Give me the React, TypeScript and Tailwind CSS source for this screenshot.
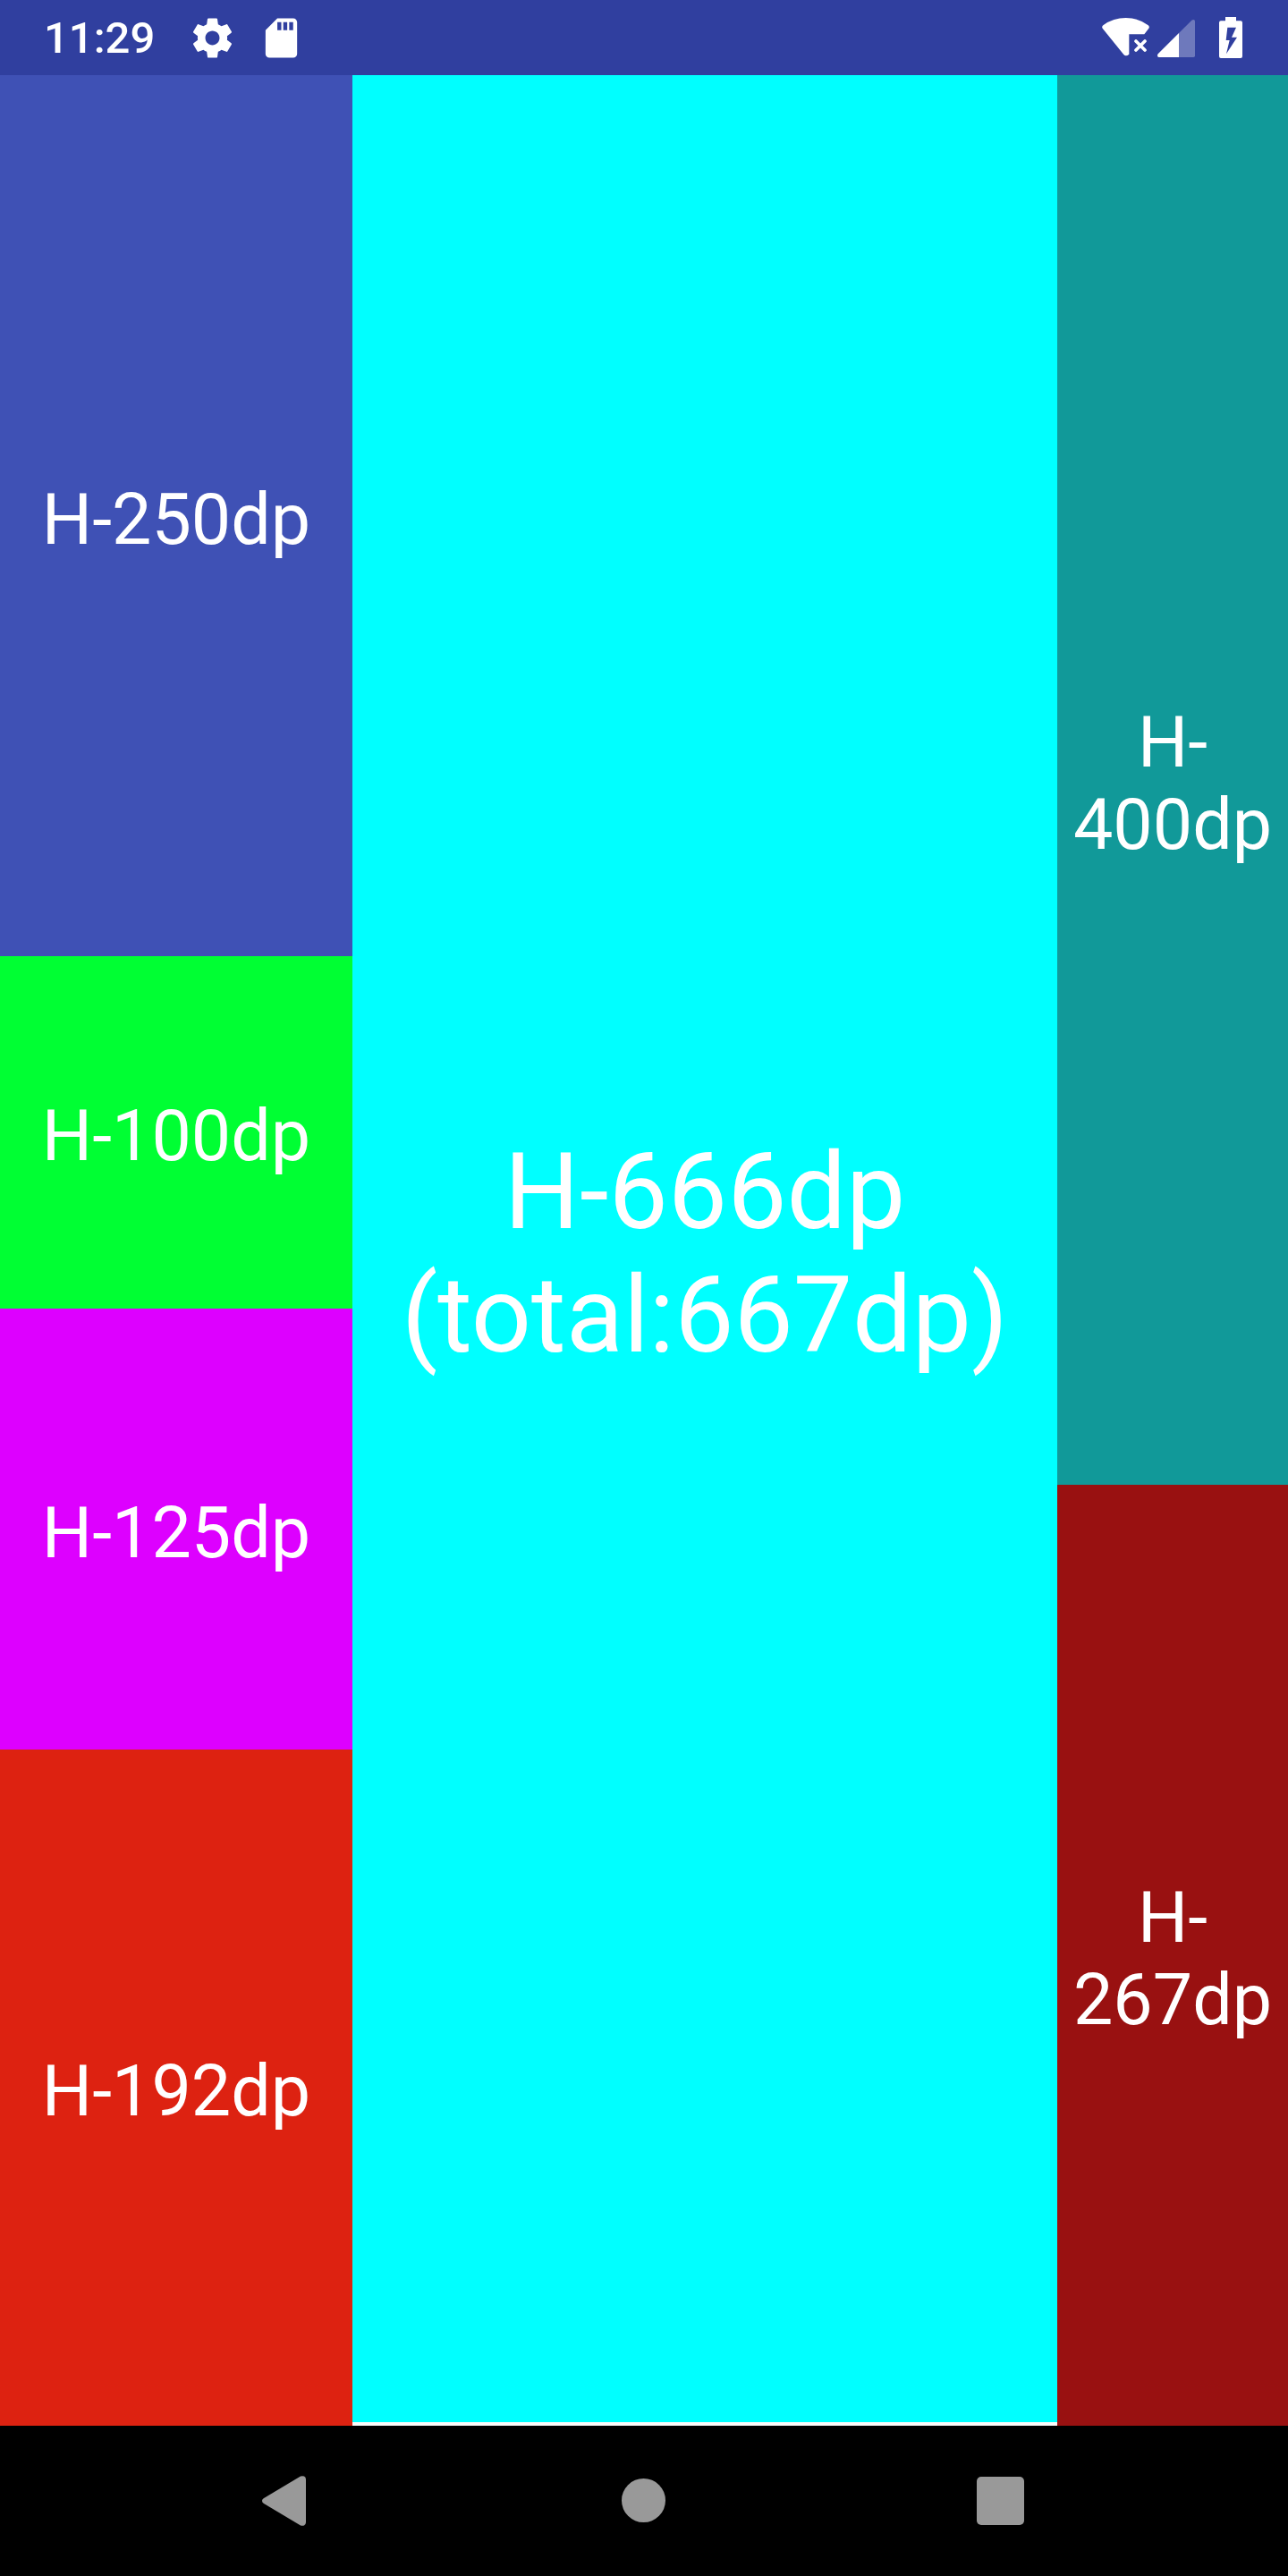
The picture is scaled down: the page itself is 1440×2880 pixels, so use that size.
import React from 'react';

type Block = { label: string; className: string };

const left: Block[] = [
  { label: 'H-250dp', className: 'grow-[985] bg-[#3f51b5]' },
  { label: 'H-100dp', className: 'grow-[394] bg-[#00ff33]' },
  { label: 'H-125dp', className: 'grow-[493] bg-[#dd00ff]' },
  { label: 'H-192dp', className: 'grow-[756] bg-[#dd2211]' },
];

const right: Block[] = [
  { label: 'H-400dp', className: 'grow-[1576] bg-[#119999]' },
  { label: 'H-267dp', className: 'grow-[1052] bg-[#991111]' },
];

function Column({ blocks, className }: { blocks: Block[]; className: string }) {
  return (
    <section className={`flex flex-col ${className}`}>
      {blocks.map((b) => (
        <div
          key={b.label}
          className={`flex basis-0 items-center justify-center text-center text-[79px] leading-[92px] ${b.className}`}
        >
          <p className="pt-2">{b.label}</p>
        </div>
      ))}
    </section>
  );
}

function StatusBar() {
  return (
    <header className="flex h-[84px] items-center bg-[#303f9f] px-[49px]">
      <span className="pt-0.5 text-[49px] font-medium">11:29</span>
      <svg className="ml-[38px] size-[53px]" viewBox="0 0 24 24" fill="currentColor" role="img" aria-label="Settings">
        <path d="M19.43 12.98c.04-.32.07-.64.07-.98s-.03-.66-.07-.98l2.11-1.65c.19-.15.24-.42.12-.64l-2-3.46c-.12-.22-.39-.3-.61-.22l-2.49 1c-.52-.4-1.08-.73-1.69-.98l-.38-2.65C14.46 2.18 14.25 2 14 2h-4c-.25 0-.46.18-.49.42l-.38 2.65c-.61.25-1.17.59-1.69.98l-2.49-1c-.23-.09-.49 0-.61.22l-2 3.46c-.13.22-.07.49.12.64l2.11 1.65c-.04.32-.07.65-.07.98s.03.66.07.98l-2.11 1.65c-.19.15-.24.42-.12.64l2 3.46c.12.22.39.3.61.22l2.49-1c.52.4 1.08.73 1.69.98l.38 2.65c.03.24.24.42.49.42h4c.25 0 .46-.18.49-.42l.38-2.65c.61-.25 1.17-.59 1.69-.98l2.49 1c.23.09.49 0 .61-.22l2-3.46c.12-.22.07-.49-.12-.64l-2.11-1.65zM12 15.6c-1.98 0-3.6-1.62-3.6-3.6s1.62-3.6 3.6-3.6 3.6 1.62 3.6 3.6-1.62 3.600-3.6 3.600z" />
      </svg>
      <svg className="ml-6 size-[53px]" viewBox="0 0 24 24" fill="currentColor" role="img" aria-label="SD card">
        <path d="M18 2h-8L4.02 8 4 20c0 1.100.9 2 2 2h12c1.100 0 2-.9 2-2V4c0-1.100-.9-2-2-2zm-6 6h-2V4h2v4zm3 0h-2V4h2v4zm3 0h-2V4h2v4z" />
      </svg>
      <svg className="ml-auto h-[46px] w-[53px]" viewBox="156 57 159 138" fill="currentColor" role="img" aria-label="Wi-Fi without internet">
        <path d="M158 95Q154 89 161 84Q194 60 236 60Q278 60 310 84Q317 89 313 95L298 115H247V182Q236 191 229 183Z" />
        <path d="M270 138L300 168M300 138L270 168" stroke="currentColor" strokeWidth="11" strokeLinecap="round" />
      </svg>
      <svg className="ml-[9px] h-[46px] w-[42px]" viewBox="342 57 126 138" fill="currentColor" role="img" aria-label="Mobile signal">
        <path opacity=".3" d="M414 111L457 68Q460 66 463 66Q468 66 468 71V187Q468 192 463 192H414Z" />
        <path d="M414 111V192H347Q342 192 342 187Q342 183 344 181Z" />
      </svg>
      <svg className="mr-0.5 ml-[27px] h-[46px] w-[26px]" viewBox="549 57 78 138" fill="currentColor" role="img" aria-label="Battery charging">
        <path fillRule="evenodd" d="M570 57H606V70H621Q627 70 627 76V189Q627 195 621 195H555Q549 195 549 189V76Q549 70 555 70H570ZM577 92L572 135H584L573 181L609 125H591L606 92Z" />
      </svg>
    </header>
  );
}

function NavigationBar() {
  return (
    <nav className="flex h-[168px] justify-center bg-black text-[#999999]">
      <button type="button" aria-label="Back" className="flex w-5/18 items-center justify-center">
        <svg className="size-14" viewBox="0 0 56 56" fill="currentColor">
          <path d="M44 .6Q46 -.3 48 .6Q50 1.600 50 4V52Q50 54.400 48 55.400Q46 56.300 44 55.400L3 31Q1 29.800 1 28Q1 26.200 3 25Z" />
        </svg>
      </button>
      <button type="button" aria-label="Home" className="flex w-5/18 items-center justify-center">
        <svg className="size-14" viewBox="0 0 56 56" fill="currentColor">
          <circle cx="27.500" cy="27.500" r="24.500" />
        </svg>
      </button>
      <button type="button" aria-label="Overview" className="flex w-5/18 items-center justify-center">
        <svg className="size-14" viewBox="0 0 56 56" fill="currentColor">
          <rect x="0" y="1" width="53" height="54" rx="5" />
        </svg>
      </button>
    </nav>
  );
}

export default function App() {
  return (
    <div className="flex min-h-screen flex-col bg-[#fafafa] font-[Roboto,sans-serif] text-white">
      <StatusBar />
      <main className="flex flex-1">
        <Column blocks={left} className="grow-[394] basis-0" />
        <section className="mb-1 flex grow-[788] basis-0 items-center justify-center bg-[#00ffff] text-center text-[118px] leading-[138px]">
          <p className="pt-3">
            H-666dp
            <br />
            (total:667dp)
          </p>
        </section>
        <Column blocks={right} className="grow-[258] basis-0" />
      </main>
      <NavigationBar />
    </div>
  );
}
